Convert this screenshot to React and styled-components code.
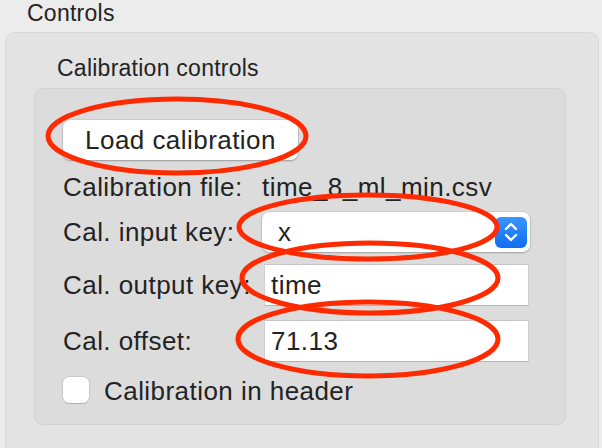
import React from "react";
import styled, { createGlobalStyle } from "styled-components";

const GlobalStyle = createGlobalStyle`
  html, body {
    margin: 0;
    padding: 0;
    background: #ececec;
  }
  body {
    font-family: "Liberation Sans", Arial, sans-serif;
    color: #232323;
    overflow: hidden;
  }
`;

const Page = styled.div`
  position: relative;
  width: 602px;
  height: 448px;
  overflow: hidden;
`;

const Title = styled.div`
  font-size: 23px;
  line-height: 26px;
  letter-spacing: 0.25px;
  padding-left: 27px;
  margin-bottom: 6px;
`;

const OuterBox = styled.div`
  margin-left: 5px;
  width: 594px;
  height: 440px;
  background: #e3e3e4;
  border: 1px solid #d8d8d8;
  border-radius: 10px;
  padding: 22px 0 0 28px;
  box-sizing: border-box;
`;

const GroupTitle = styled(Title)`
  padding-left: 23px;
  margin-bottom: 7px;
`;

const InnerBox = styled.div`
  width: 532px;
  height: 337px;
  background: #dcdcdd;
  border: 1px solid #d3d3d4;
  border-radius: 9px;
  box-sizing: border-box;
  padding: 31px 0 0 28px;
  display: flex;
  flex-direction: column;
  font-size: 26px;
  letter-spacing: 0.45px;
`;

const Button = styled.div`
  width: 235px;
  height: 40px;
  background: #fff;
  border-radius: 7px;
  box-shadow: 0 0 0 0.5px rgba(0, 0, 0, 0.12), 0 1px 2px rgba(0, 0, 0, 0.25);
  display: flex;
  align-items: center;
  justify-content: center;
  line-height: 30px;
`;

const Row = styled.div`
  display: grid;
  grid-template-columns: 199px auto;
  align-items: center;
  margin-top: ${(p) => p.$gap}px;
  line-height: 30px;
`;

const Label = styled.span`
  white-space: nowrap;
`;

const Value = styled.span`
  white-space: nowrap;
`;

const Select = styled.div`
  width: 268px;
  height: 40px;
  background: #fff;
  border-radius: 7px;
  box-shadow: 0 0 0 0.5px rgba(0, 0, 0, 0.12), 0 1px 2px rgba(0, 0, 0, 0.22);
  display: flex;
  align-items: center;
  justify-content: space-between;
  padding: 0 3px 0 16px;
  box-sizing: border-box;
`;

const Stepper = styled.div`
  width: 32px;
  height: 31px;
  border-radius: 6px;
  background: linear-gradient(#3a95ff, #0d6ff2);
  display: flex;
  align-items: center;
  justify-content: center;
`;

const Field = styled.div`
  margin-left: 2px;
  width: 265px;
  height: 42px;
  background: #fff;
  border: 1px solid #d0d0d0;
  border-top-color: #c4c4c4;
  border-bottom-color: #b4b4b4;
  box-sizing: border-box;
  display: flex;
  align-items: center;
  padding-left: 6px;
`;

const CheckRow = styled.label`
  display: flex;
  align-items: center;
  gap: 15px;
  margin-top: 14px;
  line-height: 30px;
`;

const Box = styled.span`
  width: 26px;
  height: 26px;
  background: #fff;
  border-radius: 6px;
  box-shadow: 0 0 0 0.5px rgba(0, 0, 0, 0.15), 0 1px 1px rgba(0, 0, 0, 0.15);
  margin-top: -3px;
`;

const Marks = styled.svg`
  position: absolute;
  left: 0;
  top: 0;
  pointer-events: none;
`;

const rings = [
  { cx: 177, cy: 136, rx: 129, ry: 37 },
  { cx: 368, cy: 227, rx: 129, ry: 32 },
  { cx: 370, cy: 278, rx: 128, ry: 35 },
  { cx: 368, cy: 339, rx: 130, ry: 37 },
];

export default function App() {
  return (
    <Page>
      <GlobalStyle />
      <Title>Controls</Title>
      <OuterBox>
        <GroupTitle>Calibration controls</GroupTitle>
        <InnerBox>
          <Button>Load calibration</Button>
          <Row $gap={12}>
            <Label>Calibration file:</Label>
            <Value>time_8_ml_min.csv</Value>
          </Row>
          <Row $gap={10}>
            <Label>Cal. input key:</Label>
            <Select>
              <span>x</span>
              <Stepper>
                <svg width="16" height="24" viewBox="0 0 16 24" fill="none">
                  <path
                    d="M3 9 L8 4 L13 9 M3 15 L8 20 L13 15"
                    stroke="#fff"
                    strokeWidth="2.4"
                    strokeLinecap="round"
                    strokeLinejoin="round"
                  />
                </svg>
              </Stepper>
            </Select>
          </Row>
          <Row $gap={12}>
            <Label>Cal. output key:</Label>
            <Field>time</Field>
          </Row>
          <Row $gap={14}>
            <Label>Cal. offset:</Label>
            <Field>71.13</Field>
          </Row>
          <CheckRow>
            <Box />
            <span>Calibration in header</span>
          </CheckRow>
        </InnerBox>
      </OuterBox>
      <Marks width="602" height="448" viewBox="0 0 602 448">
        {rings.map((r, i) => (
          <ellipse
            key={i}
            {...r}
            fill="none"
            stroke="#ff2a00"
            strokeWidth="5"
          />
        ))}
      </Marks>
    </Page>
  );
}
